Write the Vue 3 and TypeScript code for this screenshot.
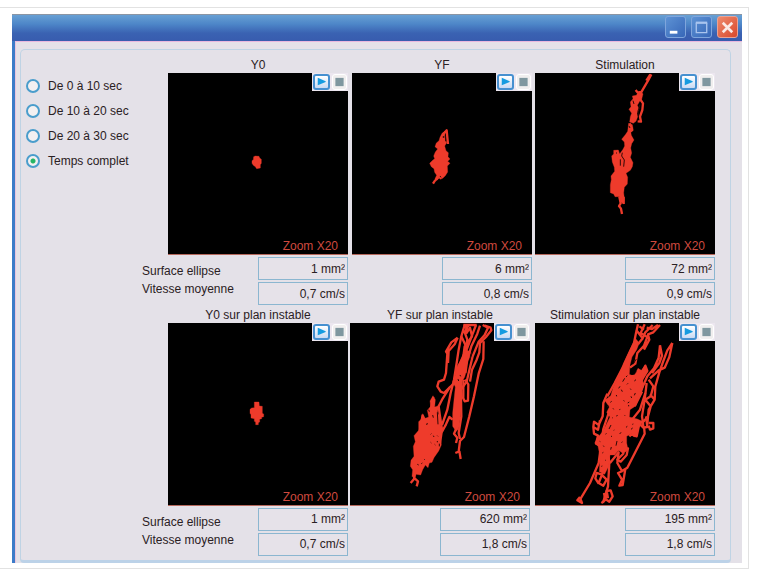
<script setup lang="ts">
import { ref } from 'vue'

interface Stroke {
  d: string
  kind: 'mass' | 'line' | 'hole'
}

interface Recording {
  title: string
  surface: string
  speed: string
  origin: string
  strokes: Stroke[]
}

const periods: string[] = ['De 0 à 10 sec', 'De 10 à 20 sec', 'De 20 à 30 sec', 'Temps complet']
const selected = ref<string>('Temps complet')

const rows: Recording[][] = [
  [
    {
      title: 'Y0',
      surface: '1 mm²',
      speed: '0,7 cm/s',
      origin: 'translate(-24 -69)',
      strokes: [
        { kind: 'mass', d: 'M281 320L286 318L297 319L299 324L304 328L304 340L301 344L301 354L290 356L286 350L280 346L276 340L276 332L280 329Z' },
      ],
    },
    {
      title: 'YF',
      surface: '6 mm²',
      speed: '0,8 cm/s',
      origin: 'translate(114 111)',
      strokes: [
        { kind: 'mass', d: 'M150 82L156 70L165 64L164 82L170 98L164 108L168 122L175 128L174 140L180 147L173 154L180 160L172 168L173 186L166 197L158 205L151 208L146 203L142 210L135 206L140 196L134 187L132 176L124 170L119 160L128 151L134 146L131 138L136 126L143 117L135 110L139 99L147 92Z' },
        { kind: 'line', d: 'M160 72L170 61L172 82L174 102M145 202L134 213L129 221' },
        { kind: 'hole', d: 'M166 78L167 94M150 198L153 202M160 78L160 84' },
      ],
    },
    {
      title: 'Stimulation',
      surface: '72 mm²',
      speed: '0,9 cm/s',
      origin: 'translate(134 -39)',
      strokes: [
        { kind: 'line', d: 'M215 43L205 62L195 79L184 98M212 43L200 62M168 90L174 98L184 96M181 117L190 130L188 150L181 170L184 185L174 184M150 190L158 210L148 217M119 410L123 430L118 438L124 446L127 462M132 410L132 432' },
        { kind: 'mass', d: 'M184 94L190 102L186 118L180 124L173 136L178 146L172 160L174 170L169 184L161 190L150 186L152 170L156 160L148 148L154 140L152 126L160 116L158 108L170 106L176 96Z' },
        { kind: 'mass', d: 'M147 190L158 194L160 206L153 214L155 226L163 240L156 251L153 264L156 279L152 292L160 308L158 320L152 331L139 340L144 352L143 372L134 382L132 398L134 416L132 432L124 426L119 410L106 410L102 402L92 398L92 374L95 359L94 348L105 334L104 322L98 306L96 288L102 282L102 271L116 270L120 282L130 268L135 258L134 246L126 238L137 224L144 214Z' },
        { kind: 'hole', d: 'M181 134L175 153L176 168M128 278L126 288L134 300L132 320M122 298L122 317M148 198L151 204M112 278L109 280M160 122L163 132' },
      ],
    },
  ],
  [
    {
      title: 'Y0 sur plan instable',
      surface: '1 mm²',
      speed: '0,7 cm/s',
      origin: 'translate(201 201)',
      strokes: [
        { kind: 'mass', d: 'M58 36L72 36L73 48L82 49L82 70L86 72L86 80L80 82L80 86L74 88L74 96L70 98L70 104L62 104L62 96L58 94L58 86L48 84L48 74L45 70L45 58L50 54L58 53Z' },
      ],
    },
    {
      title: 'YF sur plan instable',
      surface: '620 mm²',
      speed: '1,8 cm/s',
      origin: 'translate(0 -70)',
      strokes: [
        { kind: 'line', d: 'M344 76L334 110L326 150L320 190L312 240L302 280L292 330L276 376M356 76L344 98L352 120L344 160L326 200M378 76L365 110L350 150L340 190L330 220M390 78L382 102L364 140L352 180L346 220M398 76L414 84L404 106L386 126L368 170L356 220L350 246L330 274' },
        { kind: 'line', d: 'M340 76L380 76M348 76L350 100L360 84L366 110L344 140L340 170M334 110L348 140L340 186M404 78L422 84L424 92L408 112L390 130L388 158L380 180L366 210L360 246M401 125L400 178L386 222L372 290L358 350L342 412L330 424L326 456L316 460M328 454L332 478M323 114L304 128L288 156L292 162L288 220L282 240L266 246L262 260L272 276L282 280L300 262L318 246M323 114L314 134L296 154L294 190' },
        { kind: 'line', d: 'M340 240L340 296L344 305L354 303L355 254L345 240M332 240L334 350L326 400L330 418M308 360L298 352L288 374L274 400M300 262L276 300L266 320L270 350L276 390L270 430M250 292L244 320L240 350M218 345L212 380L204 420' },
        { kind: 'mass', d: 'M346 150L362 156L358 176L350 190L350 212L344 232L336 246L334 310L330 360L326 388L318 395L308 380L308 340L312 300L316 262L308 246L318 222L318 206L330 186Z' },
        { kind: 'mass', d: 'M249 288L256 300L254 322L266 318L262 340L272 352L272 378L278 392L272 410L274 436L266 454L252 474L246 488L238 490L234 504L226 496L218 510L212 526L198 524L194 538L186 530L188 510L181 500L183 482L192 470L190 440L196 426L192 408L206 392L206 366L214 358L218 342L226 356L236 352L232 332L242 320L240 304Z' },
        { kind: 'line', d: 'M194 520L192 538L182 550M194 536L204 545L200 560M320 384L312 402L322 414L318 430' },
        { kind: 'hole', d: 'M366 156L360 180M262 338L264 374M248 346L250 354M250 408L252 412M262 408L264 410M242 428L244 430M254 434L256 436M202 494L206 496M222 478L224 480M214 492L217 490M242 404L244 402M236 330L238 336M330 226L332 230M324 238L326 244M262 424L262 428M232 370L230 376M268 432L268 440' },
      ],
    },
    {
      title: 'Stimulation sur plan instable',
      surface: '195 mm²',
      speed: '1,8 cm/s',
      origin: 'translate(-15 -70)',
      strokes: [
        { kind: 'line', d: 'M324 74L318 100L312 130L298 160L280 200L254 250L232 290M344 74L332 100L352 112L342 138L322 160L316 192L300 204M368 76L346 98L336 120M390 76L370 98L354 104L358 120L342 150M384 76L366 88L350 84M318 90L338 116L324 134M328 80L342 90' },
        { kind: 'line', d: 'M390 137L386 174L372 206L352 230L334 270M390 137L396 168L388 190L366 220M427 130L412 152L400 184L388 218L376 260L374 300L356 330L352 374M427 130L418 172L404 204L386 212L360 236M356 240L370 260L362 290L346 300L362 320L354 350L340 366M374 300L360 284M350 250L344 300L336 350L340 380' },
        { kind: 'line', d: 'M232 282L220 310L218 350L206 376L192 366L190 382L204 390L210 362M190 382L192 402L204 408L198 432L212 438M236 340L220 388L214 430L206 490L180 550L150 600M150 592L142 602L156 610L150 594' },
        { kind: 'line', d: 'M232 440L238 490L234 560L220 606L214 610M228 470L226 500L206 550L220 558L230 540L214 524L200 520L196 536L206 552M240 490L266 458L262 490L276 514L292 504L344 402L342 380M278 514L264 520L276 540L268 558L278 556L286 508' },
        { kind: 'line', d: 'M222 580L226 600L218 608M230 574L226 598L238 606L248 590L242 572L230 574L234 596M356 370L370 370L370 386L360 390L356 378M348 350L352 382L340 384L328 372L320 410L304 404L298 410' },
        { kind: 'line', d: 'M264 450L294 446L290 466L272 486L262 480L282 460M302 230L332 226L346 198L352 214L330 250M314 320L336 276M306 360L330 330L346 280' },
        { kind: 'mass', d: 'M316 116L328 130L320 150L306 172L300 196L298 224L312 230L324 206L334 212L346 196L352 214L338 234L340 262L334 284L324 300L318 318L300 330L298 352L322 358L340 366L324 386L322 408L312 412L304 402L290 410L290 430L294 450L280 462L266 452L254 466L240 466L236 500L224 524L208 516L210 470L204 440L194 430L206 410L218 396L230 372L240 352L230 338L238 322L224 302L242 288L250 262L268 226L280 192L298 154Z' },
        { kind: 'hole', d: 'M284 236L278 246M292 228L288 232M270 260L266 266M294 251L291 254M259 286L260 290M274 270L277 276M301 267L303 270M303 290L305 295M241 308L245 305M231 322L236 319M249 326L251 329M268 330L271 329M281 302L283 305M293 310L298 307M313 244L318 240M316 280L313 287M319 216L315 221M296 316L296 320M262 346L260 350M283 346L285 348M243 376L237 388M229 401L227 404M243 411L246 409M261 424L258 438M244 442L242 450M273 398L269 403M288 383L292 380M307 374L310 373M303 389L308 385M209 425L211 426M220 438L222 441M217 460L220 458M225 481L227 482M214 500L217 499M275 429L277 426M251 392L253 391M247 355L249 353M319 178L309 194' },
      ],
    },
  ],
]
</script>

<template>
  <div class="frame">
    <main class="window">
      <header class="titlebar">
        <button type="button" class="caption" aria-label="Réduire">
          <svg viewBox="0 0 20 21"><path d="M4 16H12" stroke="#fff" stroke-width="3" /></svg>
        </button>
        <button type="button" class="caption" aria-label="Agrandir">
          <svg viewBox="0 0 20 21">
            <path d="M4.500 6V16.500H15.500V6" fill="none" stroke="#a9c4ee" stroke-width="1.400" />
            <path d="M4 6H16" stroke="#a9c4ee" stroke-width="2.400" />
          </svg>
        </button>
        <button type="button" class="caption close" aria-label="Fermer">
          <svg viewBox="0 0 20 21"><path d="M5 6L15 16M15 6L5 16" stroke="#fbe9e4" stroke-width="2.800" /></svg>
        </button>
      </header>

      <div class="body">
        <section class="panel">
          <form class="periods">
            <label v-for="period in periods" :key="period" class="period">
              <input v-model="selected" type="radio" name="period" :value="period" />
              <span>{{ period }}</span>
            </label>
          </form>

          <div class="results">
            <div v-for="(row, r) in rows" :key="r" class="row" :class="r === 0 ? 'stable' : 'unstable'">
              <article v-for="(item, c) in row" :key="item.title" class="cell">
                <h2 class="title">{{ item.title }}</h2>
                <div class="chart">
                  <svg class="plot" viewBox="0 0 540 544" role="img" :aria-label="item.title">
                    <g :transform="item.origin">
                      <path v-for="(s, i) in item.strokes" :key="i" :class="s.kind" :d="s.d" />
                    </g>
                  </svg>
                  <div class="controls">
                    <button type="button" class="play" aria-label="Lecture">
                      <svg viewBox="0 0 12 12"><path d="M1.500 1L11 5V6L1.500 10Z" fill="#159be0" /></svg>
                    </button>
                    <button type="button" class="stop" aria-label="Arrêt">
                      <svg viewBox="0 0 12 12"><path d="M1.500 1.500H10.500V10.500H1.500Z" fill="#7f979f" /></svg>
                    </button>
                  </div>
                  <span class="zoom">Zoom X20</span>
                </div>
                <div class="stats">
                  <div v-if="c === 0" class="names">
                    <label :for="`surface-${r}-0`">Surface ellipse</label>
                    <label :for="`speed-${r}-0`">Vitesse moyenne</label>
                  </div>
                  <div class="values">
                    <input :id="`surface-${r}-${c}`" type="text" readonly :value="item.surface" aria-label="Surface ellipse" />
                    <input :id="`speed-${r}-${c}`" type="text" readonly :value="item.speed" aria-label="Vitesse moyenne" />
                  </div>
                </div>
              </article>
            </div>
          </div>
        </section>
      </div>
    </main>
  </div>
</template>

<style>
body {
  margin: 0;
  background: #fff;
}
</style>

<style scoped>
* {
  box-sizing: border-box;
}

.frame {
  margin: 7px 8px 0 0;
  padding: 6px 6px 5px 12px;
  border: 1px solid #e2e2e2;
  border-left: 0;
  font-family: 'Liberation Sans', Arial, sans-serif;
  font-size: 12px;
  color: #2a2023;
}

.window {
  border-left: 3px solid #3c7bc8;
  background: #e4e1e8;
}

.titlebar {
  display: flex;
  justify-content: flex-end;
  gap: 5px;
  height: 27px;
  margin-left: -3px;
  padding: 1px 4px 0 0;
  border-top: 1px solid #8b95a3;
  background: linear-gradient(#68a0d4, #4d86c8 35%, #3a62b2 70%, #385cae);
}

.caption {
  width: 21px;
  height: 22px;
  padding: 0;
  border: 1px solid #7fa5dc;
  border-radius: 3px;
  background: linear-gradient(135deg, #5d92d4, #3767b8);
}

.caption svg {
  display: block;
  width: 100%;
  height: 100%;
}

.close {
  border-color: #e9a294;
  background: linear-gradient(135deg, #ee8a6c, #d9482c);
}

.body {
  padding: 7px 11px 0 4px;
  border-top: 1px solid #e9b8de;
  border-left: 1px solid #e9c3dd;
}

.panel {
  display: flex;
  padding: 7px 15px 4px 0;
  border: 1px solid #bfd3e4;
  border-bottom: 3px solid #bcd2e8;
  border-radius: 5px 5px 4px 4px;
}

.periods {
  flex: none;
  width: 121px;
  padding: 16px 0 0 5px;
}

.period {
  display: flex;
  align-items: center;
  gap: 8px;
  height: 25px;
  white-space: nowrap;
}

.period input {
  flex: none;
  appearance: none;
  width: 14px;
  height: 14px;
  margin: 0;
  border: 2px solid #4a9dcc;
  border-radius: 50%;
  background: #f3f0f1;
}

.period input:checked {
  background: radial-gradient(circle, #25b565 0 2px, #f3f0f1 3px);
}

.results {
  flex: 1;
  min-width: 0;
}

.row {
  display: grid;
}

.stable {
  grid-template-columns: 206fr 4fr 180fr 3fr 180fr;
  margin-bottom: 2px;
}

.unstable {
  grid-template-columns: 206fr 2fr 180fr 5fr 180fr;
}

.cell {
  min-width: 0;
}

.cell:nth-child(1) {
  grid-column: 1;
}

.cell:nth-child(2) {
  grid-column: 3;
}

.cell:nth-child(3) {
  grid-column: 5;
}

.title {
  margin: 0;
  font-size: 12px;
  font-weight: 400;
  line-height: 16px;
  text-align: center;
  white-space: nowrap;
}

.cell:first-child .title,
.cell:first-child .chart {
  margin-left: 26px;
}

.chart {
  position: relative;
  background: #000;
  border-bottom: 1px solid #b5685c;
}

.plot {
  display: block;
  width: 100%;
}

.mass {
  fill: #ee3b2b;
  stroke: #ee3b2b;
  stroke-width: 1;
}

.line {
  fill: none;
  stroke: #ee3b2b;
  stroke-width: 7;
  stroke-linejoin: round;
}

.hole {
  fill: none;
  stroke: #300805;
  stroke-width: 3;
}

.controls {
  position: absolute;
  top: 0;
  right: 0;
  display: flex;
  gap: 2px;
  padding: 1px;
  background: #ece6ef;
}

.controls button {
  width: 17px;
  height: 16px;
  padding: 1px;
  border: 2px solid #4690d0;
  border-radius: 3px;
  background: linear-gradient(#fff, #c9daf3);
}

.controls .stop {
  width: 15px;
  border: 1px solid #fff;
  background: #f0eeee;
}

.controls svg {
  display: block;
  width: 100%;
  height: 100%;
}

.zoom {
  position: absolute;
  right: 10px;
  bottom: 0;
  line-height: 16px;
  color: #cf4a3f;
}

.stats {
  display: flex;
  justify-content: space-between;
  padding-top: 2px;
}

.names {
  display: flex;
  flex-direction: column;
  padding-top: 5px;
  line-height: 18px;
  white-space: nowrap;
}

.values {
  display: flex;
  flex-direction: column;
  gap: 2px;
  width: 90px;
  margin-left: auto;
}

.values input {
  width: 100%;
  height: 23px;
  padding: 0 2px;
  border: 1px solid #8bb6d0;
  background: #e6e2e9;
  font: inherit;
  color: inherit;
  text-align: right;
}
</style>
